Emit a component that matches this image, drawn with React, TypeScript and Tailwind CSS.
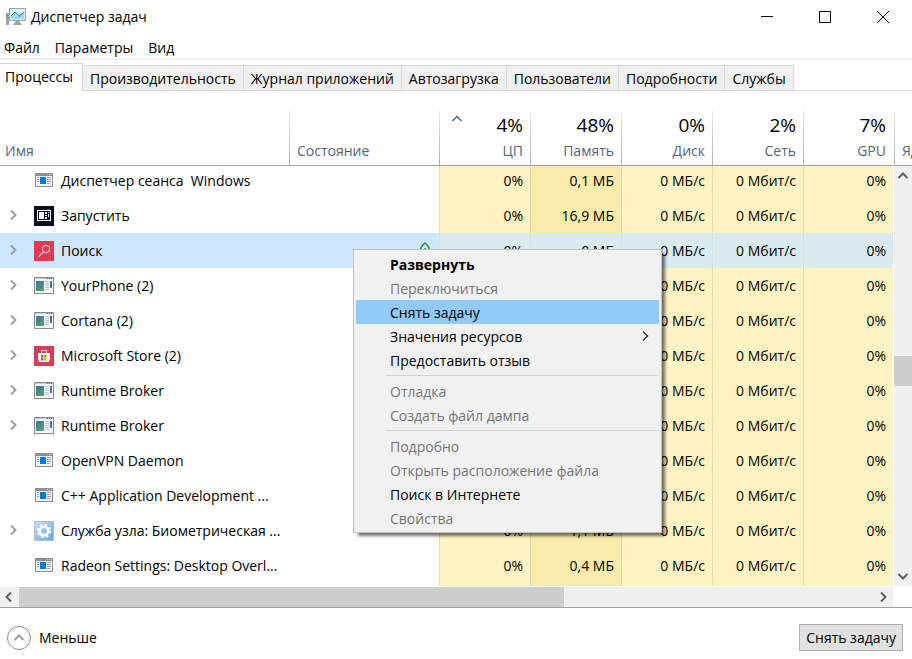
import { useState } from "react";
import clsx from "clsx";

type IconKind = "console" | "run" | "search" | "app" | "store" | "gear";

const processes: { name: string; icon: IconKind; group: boolean; mem: string; leaf?: boolean }[] = [
  { name: "Диспетчер сеанса  Windows", icon: "console", group: false, mem: "0,1 МБ" },
  { name: "Запустить", icon: "run", group: true, mem: "16,9 МБ" },
  { name: "Поиск", icon: "search", group: true, mem: "0 МБ", leaf: true },
  { name: "YourPhone (2)", icon: "app", group: true, mem: "0 МБ" },
  { name: "Cortana (2)", icon: "app", group: true, mem: "0 МБ" },
  { name: "Microsoft Store (2)", icon: "store", group: true, mem: "0 МБ" },
  { name: "Runtime Broker", icon: "app", group: true, mem: "1,2 МБ" },
  { name: "Runtime Broker", icon: "app", group: true, mem: "1,5 МБ" },
  { name: "OpenVPN Daemon", icon: "console", group: false, mem: "0,6 МБ" },
  { name: "C++ Application Development ...", icon: "console", group: false, mem: "0,8 МБ" },
  { name: "Служба узла: Биометрическая ...", icon: "gear", group: true, mem: "1,1 МБ" },
  { name: "Radeon Settings: Desktop Overl...", icon: "console", group: false, mem: "0,4 МБ" },
];

const tabs = [
  "Процессы",
  "Производительность",
  "Журнал приложений",
  "Автозагрузка",
  "Пользователи",
  "Подробности",
  "Службы",
];

const usage = [
  { value: "4%", label: "ЦП", sorted: true },
  { value: "48%", label: "Память" },
  { value: "0%", label: "Диск" },
  { value: "2%", label: "Сеть" },
  { value: "7%", label: "GPU" },
];

const menuGroups: { label: string; bold?: boolean; off?: boolean; active?: boolean; sub?: boolean }[][] = [
  [
    { label: "Развернуть", bold: true },
    { label: "Переключиться", off: true },
    { label: "Снять задачу", active: true },
    { label: "Значения ресурсов", sub: true },
    { label: "Предоставить отзыв" },
  ],
  [
    { label: "Отладка", off: true },
    { label: "Создать файл дампа", off: true },
  ],
  [
    { label: "Подробно", off: true },
    { label: "Открыть расположение файла", off: true },
    { label: "Поиск в Интернете" },
    { label: "Свойства", off: true },
  ],
];

function Chevron({ dir, className }: { dir: "up" | "down" | "left" | "right"; className?: string }) {
  const d = {
    up: "M1.500 8 6 3.500 10.500 8",
    down: "M1.500 4 6 8.500 10.500 4",
    left: "M8 1.500 3.500 6 8 10.500",
    right: "M4 1.500 8.500 6 4 10.500",
  }[dir];
  return (
    <svg viewBox="0 0 12 12" className={clsx("size-3 shrink-0", className)} fill="none" stroke="currentColor" aria-hidden="true">
      <path d={d} />
    </svg>
  );
}

function ProcessIcon({ kind }: { kind: IconKind }) {
  const cls = "size-5 shrink-0";
  if (kind === "console")
    return (
      <svg viewBox="0 0 20 20" className={cls} shapeRendering="crispEdges" aria-hidden="true">
        <path fill="#8b8f93" d="M1 2h18v14H1z" />
        <path fill="#f3f3f3" d="M2 5h16v10H2z" />
        <path fill="#d5d7d9" d="M13 3h1v1h-1zM15 3h1v1h-1zM17 3h1v1h-1z" />
        <path fill="#0078d7" d="M6 6h6v7H6z" />
        <path fill="#9a9da0" d="M3 6h2v1H3zM3 8h2v1H3zM3 10h2v1H3zM13 6h4v1h-4zM13 8h4v1h-4zM13 10h4v1h-4zM13 12h3v1h-3z" />
      </svg>
    );
  if (kind === "run")
    return (
      <svg viewBox="0 0 20 20" className={cls} shapeRendering="crispEdges" aria-hidden="true">
        <path fill="#000c23" d="M0 0h20v20H0z" />
        <path fill="#fff" d="M3 4h14v11H3z" />
        <path fill="#000c23" d="M4 5h12v9H4z" />
        <path fill="#fff" d="M5 6h5v7H5zM11 6h2v2h-2zM11 9h2v1h-2zM11 11h2v2h-2zM14 6h1v1h-1zM14 8h1v3h-1z" />
        <path fill="#fff" d="M13 3h3v1h-3z" opacity=".25" />
      </svg>
    );
  if (kind === "search")
    return (
      <svg viewBox="0 0 20 20" className={cls} fill="none" aria-hidden="true">
        <path fill="#dc3c54" d="M0 0h20v20H0z" />
        <circle cx="12" cy="8" r="3.600" stroke="#f6c3cb" strokeWidth="1.100" />
        <path stroke="#f6c3cb" strokeWidth="1.200" d="m9.500 10.600-5 5" />
      </svg>
    );
  if (kind === "store")
    return (
      <svg viewBox="0 0 20 20" className={cls} aria-hidden="true">
        <path fill="#dc3c54" d="M0 0h20v20H0z" />
        <path fill="none" stroke="#f8dfe3" d="M7.500 7.500v-3h5v3" />
        <path fill="#f6f0f0" d="M4 7h12v6l-1 3H5l-1-3z" />
        <path fill="#f25022" d="M7 9h2.500v2.500H7z" />
        <path fill="#7fba00" d="M10 9h2.500v2.500H10z" />
        <path fill="#00a4ef" d="M7 12h2.500v2.500H7z" />
        <path fill="#ffb900" d="M10 12h2.500v2.500H10z" />
      </svg>
    );
  if (kind === "gear")
    return (
      <svg viewBox="0 0 20 20" className={cls} aria-hidden="true">
        <defs>
          <linearGradient id="gear-bg" x1="0" y1="0" x2="1" y2="1">
            <stop offset="0" stopColor="#c3e0f3" />
            <stop offset="1" stopColor="#6ea3dc" />
          </linearGradient>
        </defs>
        <path fill="url(#gear-bg)" stroke="#a9bfd2" d="M.5.5h19v19H.5z" />
        <circle cx="10" cy="10" r="4.300" fill="none" stroke="#fff" strokeWidth="2.600" />
        <circle cx="10" cy="10" r="6.200" fill="none" stroke="#fff" strokeWidth="2" strokeDasharray="2.430 2.440" />
      </svg>
    );
  return (
    <svg viewBox="0 0 20 20" className={cls} aria-hidden="true">
      <defs>
        <linearGradient id="app-pane" gradientUnits="userSpaceOnUse" x1="2" y1="4" x2="12" y2="14">
          <stop offset="0" stopColor="#3a6ea8" />
          <stop offset="1" stopColor="#5aa864" />
        </linearGradient>
      </defs>
      <path fill="#f8f8f8" stroke="#85898d" d="M.5 1.500h19v16H.5z" />
      <path fill="#c3ccd6" d="M1 2h18v1H1z" />
      <path fill="#5c6670" d="M13 2h1v1h-1zM15 2h1v1h-1zM17 2h1v1h-1z" />
      <path fill="url(#app-pane)" d="M2 5h8v10H2z" />
      <path fill="#3f7a9c" d="M16 5h2v7h-2z" />
      <path fill="#c0c4c8" d="M11 5h4v1h-4zM11 7h4v1h-4zM11 9h4v1h-4zM11 11h4v1h-4zM11 13h4v1h-4z" />
    </svg>
  );
}

function TitleBar() {
  return (
    <header className="flex h-[33px] items-center">
      <svg viewBox="0 0 20 18" className="ml-1.5 h-[18px] w-5" aria-hidden="true">
        <path fill="#9aa2a6" d="M0 5h3v12H0z" />
        <path fill="#3fae49" d="M1 7h1v2H1z" />
        <path fill="#e8eef2" stroke="#9aa2a8" d="M3.500.500h16v12h-16z" />
        <path fill="#d3effc" d="M5 2h13v9H5z" />
        <path fill="#9bd6f5" d="M5 8 9 4l5 4 4-3v6H5z" />
        <path fill="none" stroke="#2b7fb8" d="M5 8 9 4l4.500 4L18 4.500" />
        <path fill="#9aa2a8" d="M10 13h3l3 4H7z" />
      </svg>
      <h1 className="ml-[5px] text-sm">Диспетчер задач</h1>
      <div className="ml-auto flex h-full">
        <button type="button" aria-label="Свернуть" className="grid w-[58px] place-items-center">
          <svg viewBox="0 0 12 12" className="size-3" stroke="#000" aria-hidden="true">
            <path d="M0 5.500h12" />
          </svg>
        </button>
        <button type="button" aria-label="Развернуть окно" className="grid w-[58px] place-items-center">
          <svg viewBox="0 0 12 12" className="size-3" fill="none" stroke="#000" aria-hidden="true">
            <path d="M.5.5h11v11H.5z" />
          </svg>
        </button>
        <button type="button" aria-label="Закрыть" className="grid w-[58px] place-items-center">
          <svg viewBox="0 0 12 12" className="size-3" stroke="#000" aria-hidden="true">
            <path d="m0 0 12 12M12 0 0 12" />
          </svg>
        </button>
      </div>
    </header>
  );
}

function ContextMenu() {
  return (
    <div
      role="menu"
      className="absolute left-[353px] top-[138px] w-[309px] border border-[#bfbfbf] bg-[#f1f1f1] p-0.5 shadow-[4px_4px_3px_-1px_rgba(0,0,0,0.55)]"
    >
      {menuGroups.map((group, i) => (
        <div key={i} role="group">
          {i > 0 && <div className="my-[3px] ml-[30px] h-px bg-[#d4d4d4]" />}
          {group.map((item) => (
            <button
              key={item.label}
              type="button"
              role="menuitem"
              disabled={item.off}
              className={clsx(
                "flex h-6 w-full items-center justify-between pt-0.5 pr-2 pl-[34px] text-left whitespace-nowrap",
                item.bold && "font-bold",
                item.off && "text-[#757575]",
                item.active && "bg-[#91c9f7]"
              )}
            >
              {item.label}
              {item.sub && <Chevron dir="right" className="mb-0.5 stroke-[1.5] text-[#333]" />}
            </button>
          ))}
        </div>
      ))}
    </div>
  );
}

const numCell = "border-l pr-[7px] text-right";

function ProcessTable({ selected, onSelect }: { selected: number; onSelect: (i: number) => void }) {
  return (
    <table className="min-w-0 flex-1 table-fixed border-separate border-spacing-0 whitespace-pre">
      <colgroup>
        <col />
        <col className="w-[150px]" />
        <col className="w-[91px]" />
        <col className="w-[91px]" />
        <col className="w-[91px]" />
        <col className="w-[91px]" />
        <col className="w-[90px]" />
      </colgroup>
      <thead>
        <tr className="h-[55px] text-left align-bottom text-[#53657c]">
          <th className="border-b border-[#a0a0a0] pb-1 pl-[5px] font-normal">Имя</th>
          <th className="border-b border-[#a0a0a0] bg-[linear-gradient(#e8e8e8,#b0b0b0)] bg-[length:1px_100%] bg-no-repeat pb-1 pl-2 font-normal">
            Состояние
          </th>
          {usage.map((u) => (
            <th
              key={u.label}
              aria-sort={u.sorted ? "ascending" : undefined}
              className="relative border-b border-[#a0a0a0] bg-[linear-gradient(#e8e8e8,#b0b0b0)] bg-[length:1px_100%] bg-no-repeat pr-[7px] pb-1 text-right font-normal"
            >
              {u.sorted && <Chevron dir="up" className="absolute top-0.5 left-3 stroke-[1.5]" />}
              <div className="pb-1 text-[19px]/6 text-black">{u.value}</div>
              <div>{u.label}</div>
            </th>
          ))}
        </tr>
      </thead>
      <tbody>
        {processes.map((p, i) => {
          const on = i === selected;
          const heat = on ? "border-[#d3e0dd] bg-[#d9ebef]" : "border-[#ecd9a4] bg-[#fff3c4]";
          const memHeat = on ? "border-[#d3e0dd] bg-[#d9ebef]" : "border-[#ecd9a4] bg-[#f9eba9]";
          return (
            <tr
              key={i}
              aria-selected={on}
              onClick={() => onSelect(i)}
              className={clsx(i === 0 ? "h-8 [&>td]:pb-[3px]" : "h-[35px]", on && "bg-[#cde8ff]")}
            >
              <td className="p-0">
                <div className="flex items-center">
                  <span className="flex w-[34px] pl-[7px]">
                    {p.group && (
                      <button type="button" aria-label={`Раскрыть ${p.name}`} className="pb-0.5 text-[#a0a0a0]">
                        <Chevron dir="right" className="stroke-2" />
                      </button>
                    )}
                  </span>
                  <ProcessIcon kind={p.icon} />
                  <span className="ml-[7px]">{p.name}</span>
                </div>
              </td>
              <td className="p-0">
                {p.leaf && (
                  <svg viewBox="0 0 12 18" className="mr-2 ml-auto h-[18px] w-3" fill="none" stroke="#2f8f2f" strokeWidth="1.500" aria-hidden="true">
                    <path d="M6 1Q1 5 1 10t5 5q5 0 5-5T6 1ZM6 6v11" />
                  </svg>
                )}
              </td>
              <td className={clsx(numCell, heat)}>0%</td>
              <td className={clsx(numCell, memHeat)}>{p.mem}</td>
              <td className={clsx(numCell, heat)}>0 МБ/с</td>
              <td className={clsx(numCell, heat)}>0 Мбит/с</td>
              <td className={clsx(numCell, heat)}>0%</td>
            </tr>
          );
        })}
        {/* sliver of the next row */}
        <tr className="h-[3px]" aria-hidden="true">
          <td className="p-0" />
          <td className="p-0" />
          <td className="border-l border-[#ecd9a4] bg-[#fff3c4] p-0" />
          <td className="border-l border-[#ecd9a4] bg-[#f9eba9] p-0" />
          <td className="border-l border-[#ecd9a4] bg-[#fff3c4] p-0" />
          <td className="border-l border-[#ecd9a4] bg-[#fff3c4] p-0" />
          <td className="border-l border-[#ecd9a4] bg-[#fff3c4] p-0" />
        </tr>
      </tbody>
    </table>
  );
}

export default function App() {
  const [tab, setTab] = useState(0);
  const [selected, setSelected] = useState(2);

  return (
    <div className="min-h-screen overflow-hidden bg-white font-['Open_Sans','Noto_Sans',sans-serif] text-sm text-black">
      <TitleBar />
      <nav className="flex h-[27px] items-center gap-[15px] border-b-2 border-[#f0f0f0] pt-1 pl-1">
        <button type="button">Файл</button>
        <button type="button">Параметры</button>
        <button type="button">Вид</button>
      </nav>

      <div role="tablist" className="mt-[3px] flex h-7 items-end border-b border-[#d9d9d9]">
        {tabs.map((t, i) => (
          <button
            key={t}
            type="button"
            role="tab"
            aria-selected={i === tab}
            onClick={() => setTab(i)}
            className={clsx(
              "border-t border-r border-[#d9d9d9] whitespace-nowrap",
              i === tab ? "-mb-px h-7 bg-white pr-[9px] pb-0.5 pl-[5px]" : "h-[25px] bg-[#f0f0f0] px-[7px] pt-0.5"
            )}
          >
            {t}
          </button>
        ))}
      </div>

      <main className="relative mt-5">
        <div className="flex">
          <ProcessTable selected={selected} onSelect={setSelected} />
          <div className="ml-px flex w-[18px] shrink-0 flex-col">
            <div className="flex h-[55px] items-end overflow-hidden border-b border-[#a0a0a0] bg-[linear-gradient(#e8e8e8,#b0b0b0)] bg-[length:1px_100%] bg-no-repeat pb-1 pl-2 text-[#53657c]">
              Ядро
            </div>
            <div className="flex flex-1 flex-col items-center bg-[#f0f0f0] text-[#606060]">
              <Chevron dir="up" className="mt-1 stroke-2" />
              <div className="mt-[174px] h-[30px] w-full bg-[#cdcdcd]" />
              <Chevron dir="down" className="mt-auto mb-1 stroke-2" />
            </div>
          </div>
        </div>
        <div className="mt-px flex border-b border-[#a0a0a0] pr-[19px]">
          <div className="flex h-5 flex-1 items-center bg-[#f0f0f0] text-[#606060]">
            <Chevron dir="left" className="mr-1 ml-[3px] stroke-2" />
            <div className="h-full w-[61%] bg-[#cdcdcd]" />
            <Chevron dir="right" className="mr-1 ml-auto stroke-2" />
          </div>
        </div>
        <ContextMenu />
      </main>

      <footer className="flex items-center justify-between pt-4 pr-[9px] pb-2 pl-[7px]">
        <button type="button" className="flex items-center gap-2">
          <span className="grid size-6 place-items-center rounded-full border border-[#8a8a8a] text-[#a0a0a0]">
            <Chevron dir="up" className="stroke-2" />
          </span>
          Меньше
        </button>
        <button type="button" className="h-[27px] border border-[#adadad] bg-[#e1e1e1] px-1.5">
          Снять задачу
        </button>
      </footer>
    </div>
  );
}
